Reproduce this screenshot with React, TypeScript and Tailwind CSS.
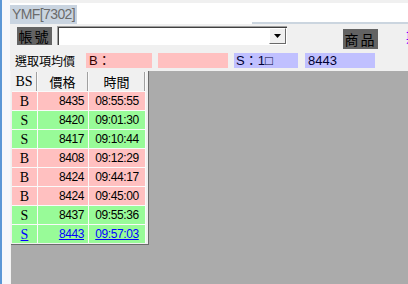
import React from "react";

type Deal = { bs: "B" | "S"; price: string; time: string; link?: boolean };

const DEALS: Deal[] = [
  { bs: "B", price: "8435", time: "08:55:55" },
  { bs: "S", price: "8420", time: "09:01:30" },
  { bs: "S", price: "8417", time: "09:10:44" },
  { bs: "B", price: "8408", time: "09:12:29" },
  { bs: "B", price: "8424", time: "09:44:17" },
  { bs: "B", price: "8424", time: "09:45:00" },
  { bs: "S", price: "8437", time: "09:55:36" },
  { bs: "S", price: "8443", time: "09:57:03", link: true },
];

const CJK = "font-['Noto_Sans_CJK_TC','Noto_Sans_CJK_SC',sans-serif]";
const SANS = "font-['Liberation_Sans','Noto_Sans_CJK_TC',sans-serif]";
const SERIF = "font-['Liberation_Serif',serif]";

function DealRow({ deal }: { deal: Deal }) {
  const bg = deal.bs === "B" ? "bg-[#ffc0c0]" : "bg-[#98fb98]";
  const text = deal.link ? "text-[#0000ff] underline" : "text-black";
  return (
    <>
      <div className={`${bg} ${text} ${SERIF} flex h-[18px] items-center justify-center text-[14px]`}>
        {deal.bs}
      </div>
      <div className={`${bg} ${text} ${SANS} flex h-[18px] items-center justify-end pr-[4px] text-[12px] tracking-[-0.4px]`}>
        {deal.price}
      </div>
      <div className={`${bg} ${text} ${SANS} flex h-[18px] items-center justify-center text-[12px] tracking-[-0.4px]`}>
        {deal.time}
      </div>
    </>
  );
}

export default function App() {
  return (
    <div className="flex h-[284px] w-[408px] overflow-hidden bg-[#f0f0f0]">
      {/* window edge */}
      <div className="flex h-full w-[10px] shrink-0">
        <div className="h-full w-[2px] bg-[#5b96d6]" />
        <div className="h-full flex-1 bg-[#f6f7fb]" />
      </div>

      <div className="flex min-w-0 flex-1 flex-col overflow-hidden">
        {/* tab strip */}
        <div className="mt-[3px] flex h-[21px] shrink-0 bg-white">
          <div className={`${SANS} mt-[2px] flex h-[19px] shrink-0 items-center whitespace-nowrap bg-[#c9d4e0] px-[2px] text-[14px] tracking-[-0.6px] text-[#6b6b6b]`}>
            YMF[7302]
          </div>
          <div className="w-[175px] shrink-0" />
          <div className="flex-1 border-b-2 border-[#cbd5df]" />
        </div>

        {/* account / product row */}
        <div className="flex h-[27px] shrink-0 items-start">
          <div className={`${CJK} ml-[7px] mt-[3px] flex h-[18px] w-[35px] shrink-0 items-center justify-center whitespace-nowrap bg-[#636363] text-[14px] leading-none tracking-[2px] text-black`}>
            帳號
          </div>
          <div className="ml-[5px] mt-[2px] flex h-[19px] w-[230px] shrink-0 items-stretch border-t border-l border-[#a0a0a0] border-b-[#e3e3e3] border-r-[#e3e3e3] bg-white shadow-[inset_1px_1px_0_#404040]">
            <div className="flex-1" />
            <div className="my-[1px] mr-[1px] flex w-[17px] items-center justify-center border border-t-white border-l-white border-b-[#696969] border-r-[#696969] bg-[#f0f0f0]">
              <svg width="7" height="4" viewBox="0 0 7 4">
                <path d="M0 0h7L3.5 4z" fill="#000" />
              </svg>
            </div>
          </div>
          <div className={`${CJK} ml-[56px] mt-[5px] flex h-[20px] w-[35px] shrink-0 items-center justify-center whitespace-nowrap bg-[#636363] text-[14px] leading-none tracking-[2px] text-black`}>
            商品
          </div>
          <div className={`${CJK} ml-[28px] mt-[5px] shrink-0 whitespace-nowrap text-[14px] leading-none text-[#8000ff]`}>
            期
          </div>
        </div>

        {/* average price row */}
        <div className="flex h-[20px] shrink-0 items-start pt-[2px]">
          <div className={`${CJK} ml-[5px] w-[71px] shrink-0 whitespace-nowrap text-[12px] leading-[15px] text-black`}>
            選取項均價
          </div>
          <div className={`${SANS} flex h-[15px] w-[66px] shrink-0 items-center bg-[#ffc0c0] pl-[3px] text-[13px] text-[#300]`}>
            B：
          </div>
          <div className="ml-[6px] h-[15px] w-[70px] shrink-0 bg-[#ffc0c0]" />
          <div className={`${SANS} ml-[6px] flex h-[15px] w-[64px] shrink-0 items-center bg-[#c0c0ff] pl-[2px] text-[13px] text-[#003]`}>
            S：1□
          </div>
          <div className={`${SANS} ml-[7px] flex h-[15px] w-[70px] shrink-0 items-center bg-[#c0c0ff] pl-[3px] text-[13px] text-[#003]`}>
            8443
          </div>
        </div>

        {/* deal list */}
        <div className="flex-1 border-l border-[#f4f4f4] bg-[#ababab]">
          <div className="w-[138px] border-r border-b border-[#6b6b6b] bg-[#f0f0f0] pt-[1px] pr-[2px] pb-[1px] pl-[1px]">
            <div className="grid grid-cols-[25px_50px_56px] gap-px bg-[#fafafa]">
              <div className={`${SERIF} flex h-[19px] items-center justify-center border-r border-[#a0a0a0] bg-[#f0f0f0] text-[14px] text-black`}>
                BS
              </div>
              <div className={`${CJK} flex h-[19px] items-center justify-center border-r border-[#a0a0a0] bg-[#f0f0f0] text-[13px] text-black`}>
                價格
              </div>
              <div className={`${CJK} flex h-[19px] items-center justify-center border-r border-[#a0a0a0] bg-[#f0f0f0] text-[13px] text-black`}>
                時間
              </div>
              {DEALS.map((d, i) => (
                <DealRow key={i} deal={d} />
              ))}
            </div>
          </div>
        </div>
      </div>
    </div>
  );
}
